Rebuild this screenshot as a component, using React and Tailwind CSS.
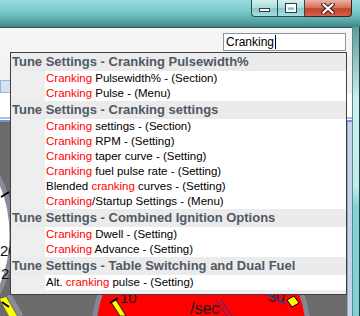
const sections = [
  {
    title: 'Tune Settings - Cranking Pulsewidth%',
    items: [
      { pre: '', hit: 'Cranking', post: ' Pulsewidth% - (Section)' },
      { pre: '', hit: 'Cranking', post: ' Pulse - (Menu)' },
    ],
  },
  {
    title: 'Tune Settings - Cranking settings',
    items: [
      { pre: '', hit: 'Cranking', post: ' settings - (Section)' },
      { pre: '', hit: 'Cranking', post: ' RPM - (Setting)' },
      { pre: '', hit: 'Cranking', post: ' taper curve - (Setting)' },
      { pre: '', hit: 'Cranking', post: ' fuel pulse rate - (Setting)' },
      { pre: 'Blended ', hit: 'cranking', post: ' curves - (Setting)' },
      { pre: '', hit: 'Cranking', post: '/Startup Settings - (Menu)' },
    ],
  },
  {
    title: 'Tune Settings - Combined Ignition Options',
    items: [
      { pre: '', hit: 'Cranking', post: ' Dwell - (Setting)' },
      { pre: '', hit: 'Cranking', post: ' Advance - (Setting)' },
    ],
  },
  {
    title: 'Tune Settings - Table Switching and Dual Fuel',
    items: [{ pre: 'Alt. ', hit: 'cranking', post: ' pulse - (Setting)' }],
  },
];

const Gauges = () => (
  <svg width="347" height="194" viewBox="0 0 347 194" className="block">
    {/* left gauge */}
    <ellipse cx="-62" cy="113" rx="74" ry="100" fill="#ffffff" stroke="#8b8b99" strokeWidth="5" />
    <line x1="1" y1="75" x2="9" y2="70" stroke="#000" strokeWidth="2" />
    <text x="0" y="134" fontSize="15" fontFamily="Liberation Sans, Arial, sans-serif" fill="#111">20</text>
    <text x="1" y="157" fontSize="15" fontFamily="Liberation Sans, Arial, sans-serif" fill="#111">2</text>
    <line x1="9" y1="173" x2="21" y2="194" stroke="#8b8b99" strokeWidth="5" />
    <polygon points="0,177 6,175 17,194 9,194" fill="#ffff00" />
    <line x1="2" y1="180" x2="9" y2="185" stroke="#000" strokeWidth="2" />

    {/* red gauge */}
    <circle cx="201" cy="208" r="107" fill="#ff0000" stroke="#85859a" strokeWidth="5" />
    <polygon points="111,180 116,178 126,194 120,194" fill="#ffff00" stroke="#000" strokeWidth="0.8" />
    <line x1="110" y1="181" x2="118" y2="176" stroke="#000" strokeWidth="2" />
    <text x="120" y="181" fontSize="15" fontFamily="Liberation Sans, Arial, sans-serif" fill="#1a1a1a">10</text>
    <text x="190" y="192" fontSize="16" fontFamily="Liberation Sans, Arial, sans-serif" fill="#1c1c1c">/sec</text>
    <line x1="216" y1="178" x2="227" y2="194" stroke="#1a3a9a" strokeWidth="1" />
    <line x1="221" y1="178" x2="232" y2="194" stroke="#1a3a9a" strokeWidth="1" />
    <text x="268" y="180" fontSize="15" fontFamily="Liberation Sans, Arial, sans-serif" fill="#1a1a1a">30</text>
    <line x1="258" y1="168" x2="286" y2="182" stroke="#1f3fb0" strokeWidth="1.5" />
    <polygon points="287,178 294,174 299,181 292,185" fill="#ffff00" stroke="#000" strokeWidth="1" />
  </svg>
);

export default function App() {
  return (
    <div className="relative flex h-[316px] w-[360px] flex-col overflow-hidden font-['Liberation_Sans',Arial,sans-serif]">
      {/* title bar */}
      <div className="flex h-[27px] shrink-0 justify-end bg-[linear-gradient(to_bottom,#98dcdd,#7acbcd_40%,#5aa9ab_75%,#3f8587)] pr-[8px]">
        <div className="flex h-[17px]">
          <div className="flex w-[27px] items-center justify-center rounded-bl-[4px] border border-t-0 border-[#2f4a4c] bg-[linear-gradient(to_bottom,#d4efef,#a9dcdd_50%,#86c9cb_51%,#a4dfe0)]">
            <div className="mt-[4px] h-[4px] w-[11px] border border-[#2e3d3e] bg-white" />
          </div>
          <div className="flex w-[27px] items-center justify-center border border-t-0 border-l-0 border-[#2f4a4c] bg-[linear-gradient(to_bottom,#d4efef,#a9dcdd_50%,#86c9cb_51%,#a4dfe0)]">
            <div className="h-[8px] w-[10px] border-2 border-t-[3px] border-white outline outline-1 outline-[#2e3d3e]" />
          </div>
          <div className="flex w-[47px] items-center justify-center rounded-br-[4px] border border-t-0 border-l-0 border-[#3a2420] bg-[linear-gradient(to_bottom,#eab2a4,#d9755f_45%,#c4432b_55%,#d6604a)]">
            <svg width="14" height="11" viewBox="0 0 14 11">
              <path d="M2.5 1.5 L11.5 9.5 M11.5 1.5 L2.5 9.5" stroke="#3a1d18" strokeWidth="4.2" strokeLinecap="square" />
              <path d="M2.5 1.5 L11.5 9.5 M11.5 1.5 L2.5 9.5" stroke="#ffffff" strokeWidth="2.2" strokeLinecap="square" />
            </svg>
          </div>
        </div>
      </div>

      <div className="flex flex-1">
        {/* client area */}
        <div className="flex w-[352px] flex-col border-t border-[#2d5253]">
          <div className="flex h-[28px] justify-end bg-[#f5f5f5] pt-[5px] pr-[6px]">
            <div className="flex h-[18px] w-[123px] items-center border border-[#8797a6] bg-white pl-[2px] text-[12px] text-black">
              Cranking
              <span className="ml-[1px] h-[14px] w-[1px] bg-black" />
            </div>
          </div>
          <div className="flex h-[66px] flex-col bg-[#f2f2f2]">
            <div className="h-[24px]" />
            <div className="h-[13px] w-[40px] border border-[#9db4d4] bg-[#d3e2f3]" />
            <div className="flex-1 bg-white" />
            <div className="h-[2px] bg-[#a9bfe4]" />
            <div className="h-[1px] bg-white" />
            <div className="h-[2px] bg-[#7393cc]" />
          </div>
          <div className="flex flex-1 bg-[#6b6b6b]">
            <Gauges />
            <div className="w-[5px] border-l border-[#8ea4c8] bg-[#c7d5e8]" />
          </div>
        </div>
        {/* window frame */}
        <div className="w-[8px] border-l border-r border-l-[#5d8788] border-r-[#2b3b3c] bg-[linear-gradient(to_bottom,#5f9c9d,#c9f1f1_25%,#bdeeee_55%,#7ed6d6_62%,#7ad4d4)]" />
      </div>

      {/* search results popup */}
      <div className="absolute top-[52px] left-[10px] w-[337px] border border-[#404040] bg-[#eeeeee] pb-[4px]">
        {sections.map((s) => (
          <div key={s.title}>
            <div className="flex h-[18px] items-center bg-[#ebebeb] pl-[1px] text-[13px] font-bold whitespace-nowrap text-[#4f5965]">
              {s.title}
            </div>
            {s.items.map((it, i) => (
              <div key={i} className="ml-[34px] flex h-[15px] items-center bg-white pl-[1px] text-[11.5px] whitespace-pre text-black">
                {it.pre}
                <span className="text-[#ff0000]">{it.hit}</span>
                {it.post}
              </div>
            ))}
          </div>
        ))}
      </div>
    </div>
  );
}
